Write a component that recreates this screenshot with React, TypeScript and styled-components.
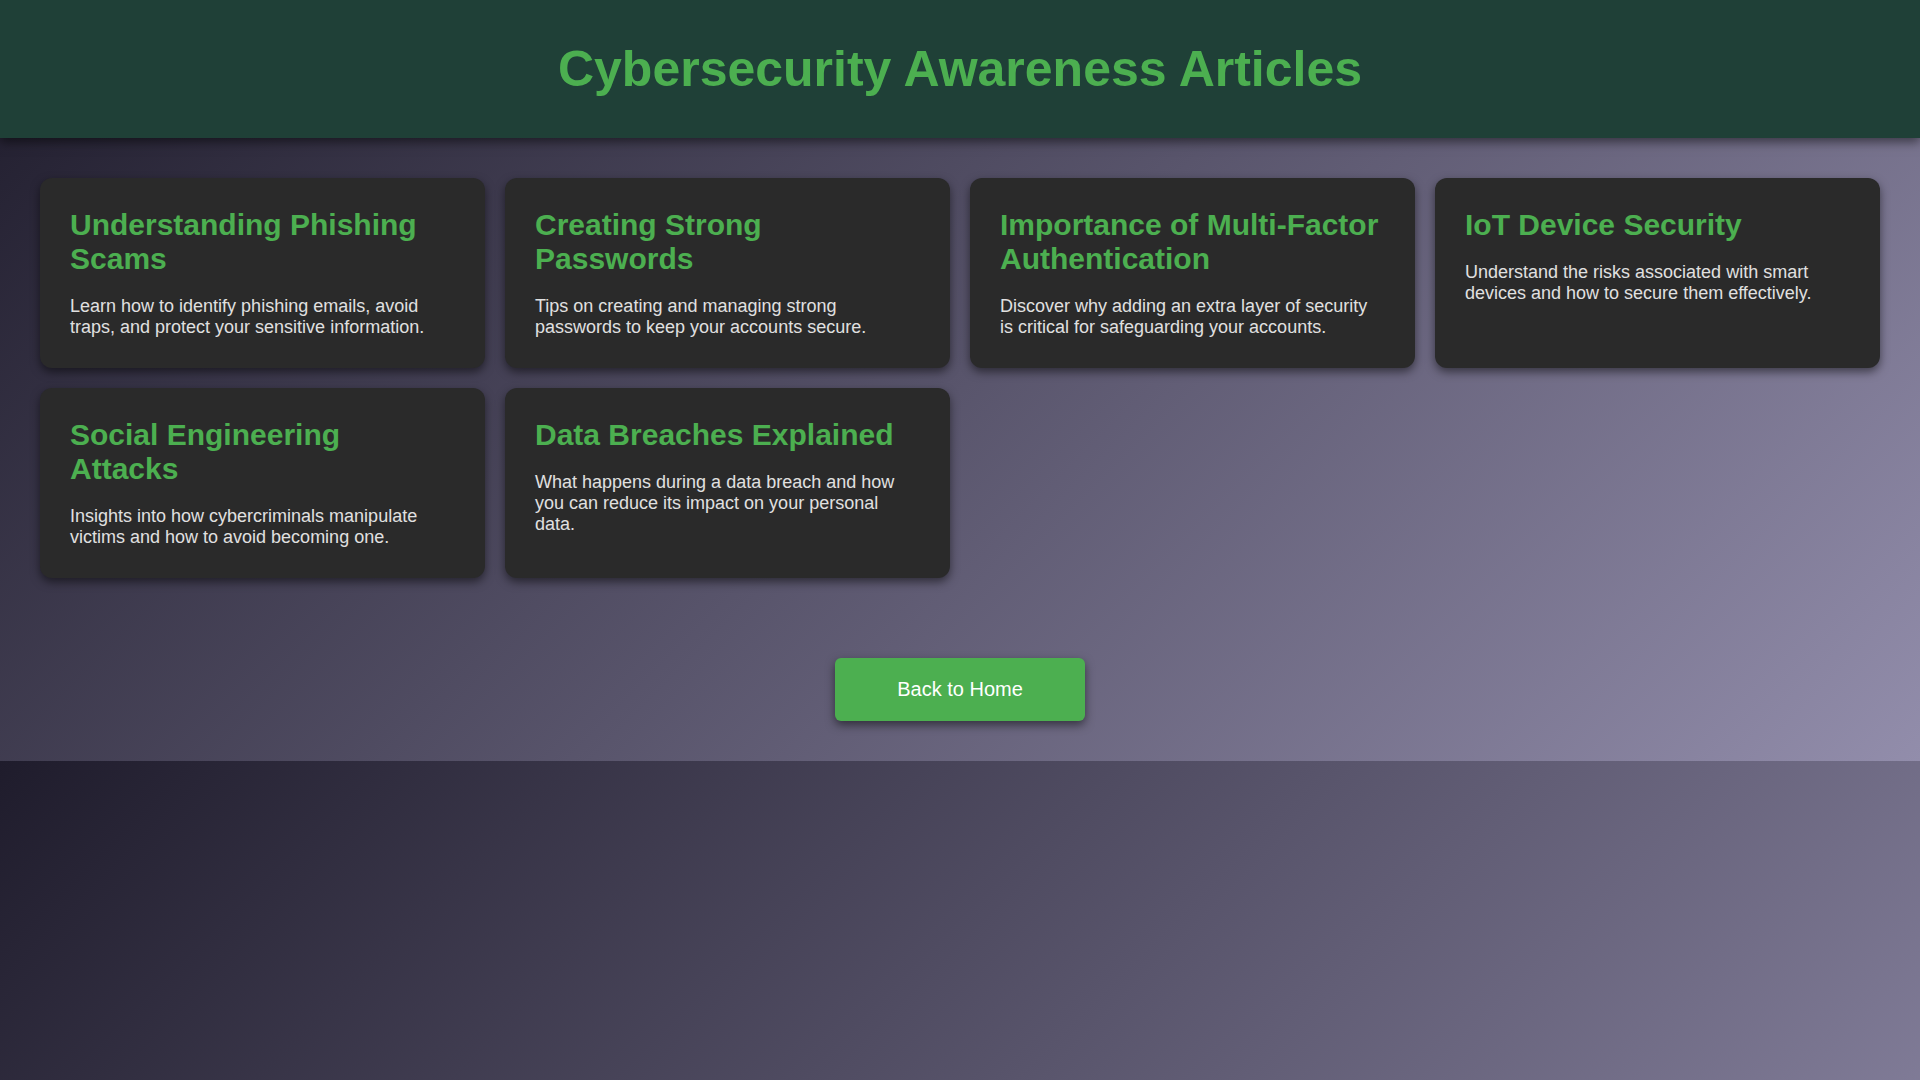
import React from "react";
import styled, { createGlobalStyle } from "styled-components";

const GlobalStyle = createGlobalStyle`
  * {
    box-sizing: border-box;
  }

  body {
    margin: 0;
    color: #e0e0e0;
    font-family: Arial, "Liberation Sans", sans-serif;
    background: linear-gradient(135deg, #1f1c2c, #928dab);
  }
`;

const Header = styled.header`
  padding: 40px;
  text-align: center;
  background: #1f4037;
  box-shadow: 0 4px 10px rgba(0, 0, 0, 0.5);
`;

const PageTitle = styled.h1`
  margin: 0;
  color: #4caf50;
  font-size: 50px;
  line-height: 58px;
`;

const ArticleGrid = styled.main`
  display: grid;
  grid-template-columns: repeat(auto-fill, minmax(360px, 1fr));
  gap: 20px;
  padding: 40px;
`;

const Card = styled.article`
  padding: 30px;
  border-radius: 12px;
  background: #2a2a2a;
  box-shadow: 0 4px 10px rgba(0, 0, 0, 0.5);
`;

const CardTitle = styled.h2`
  margin: 0 0 20px;
  color: #4caf50;
  font-size: 30px;
  line-height: 34px;
`;

const CardText = styled.p`
  margin: 0;
  font-size: 18px;
  line-height: 21px;
`;

const Footer = styled.footer`
  display: flex;
  justify-content: center;
  padding: 40px;
`;

const HomeLink = styled.a`
  width: 250px;
  padding: 20px;
  border-radius: 6px;
  color: #ffffff;
  background: #4caf50;
  box-shadow: 0 4px 10px rgba(0, 0, 0, 0.5);
  font-size: 20px;
  line-height: 23px;
  text-align: center;
  text-decoration: none;
`;

const articles = [
  {
    title: "Understanding Phishing Scams",
    text: "Learn how to identify phishing emails, avoid traps, and protect your sensitive information.",
  },
  {
    title: "Creating Strong Passwords",
    text: "Tips on creating and managing strong passwords to keep your accounts secure.",
  },
  {
    title: "Importance of Multi-Factor Authentication",
    text: "Discover why adding an extra layer of security is critical for safeguarding your accounts.",
  },
  {
    title: "IoT Device Security",
    text: "Understand the risks associated with smart devices and how to secure them effectively.",
  },
  {
    title: "Social Engineering Attacks",
    text: "Insights into how cybercriminals manipulate victims and how to avoid becoming one.",
  },
  {
    title: "Data Breaches Explained",
    text: "What happens during a data breach and how you can reduce its impact on your personal data.",
  },
];

export default function App() {
  return (
    <>
      <GlobalStyle />
      <Header>
        <PageTitle>Cybersecurity Awareness Articles</PageTitle>
      </Header>
      <ArticleGrid>
        {articles.map((article) => (
          <Card key={article.title}>
            <CardTitle>{article.title}</CardTitle>
            <CardText>{article.text}</CardText>
          </Card>
        ))}
      </ArticleGrid>
      <Footer>
        <HomeLink href="#">Back to Home</HomeLink>
      </Footer>
    </>
  );
}
